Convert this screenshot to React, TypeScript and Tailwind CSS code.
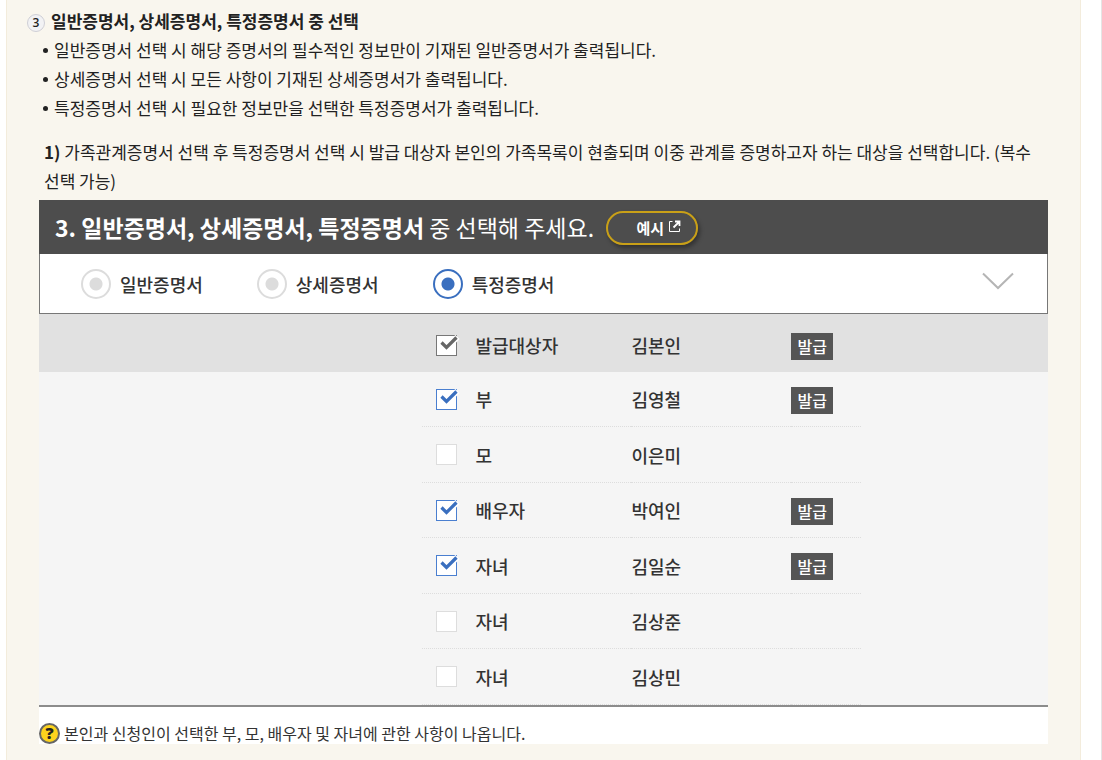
import { useState } from "react";

const CERT_TYPES = ["일반증명서", "상세증명서", "특정증명서"];

const NOTES = [
  "일반증명서 선택 시 해당 증명서의 필수적인 정보만이 기재된 일반증명서가 출력됩니다.",
  "상세증명서 선택 시 모든 사항이 기재된 상세증명서가 출력됩니다.",
  "특정증명서 선택 시 필요한 정보만을 선택한 특정증명서가 출력됩니다.",
];

const FAMILY = [
  { id: "father", relation: "부", name: "김영철", issued: true },
  { id: "mother", relation: "모", name: "이은미", issued: false },
  { id: "spouse", relation: "배우자", name: "박여인", issued: true },
  { id: "child1", relation: "자녀", name: "김일순", issued: true },
  { id: "child2", relation: "자녀", name: "김상준", issued: false },
  { id: "child3", relation: "자녀", name: "김상민", issued: false },
];

type CheckProps = {
  id: string;
  checked: boolean;
  locked?: boolean;
  onChange?: () => void;
};

function CheckBox({ id, checked, locked, onChange }: CheckProps) {
  return (
    <span className="relative block size-[21px] shrink-0">
      <input
        id={id}
        type="checkbox"
        checked={checked}
        readOnly={locked}
        onChange={onChange}
        className={`peer block size-[21px] appearance-none border border-[#dddddd] bg-white ${
          locked ? "checked:border-[#777777]" : "checked:border-[#4a7fd0]"
        }`}
      />
      <svg
        viewBox="0 0 24 24"
        className={`pointer-events-none absolute top-0 left-0 hidden size-6 peer-checked:block ${
          locked ? "text-[#666666]" : "text-[#3a6fbf]"
        }`}
        fill="none"
      >
        {/* white halo opens the corner of the box */}
        <path d="M17.500 6L21.500 2" stroke="white" strokeWidth="6" />
        <path d="M5.500 7.500L10.500 12.500L20.500 2.500" stroke="currentColor" strokeWidth="3.200" />
      </svg>
    </span>
  );
}

function Badge() {
  return (
    <span className="inline-block bg-[#555555] px-[6px] text-[16px] leading-[27px] font-medium text-white">
      발급
    </span>
  );
}

type RowProps = CheckProps & { relation: string; name: string; issued: boolean };

function FamilyRow({ relation, name, issued, ...check }: RowProps) {
  const cell = check.locked ? "pt-1" : "border-b border-dotted border-[#dddddd]";
  return (
    <tr className={check.locked ? "h-[58px] bg-[#e1e1e1]" : "h-[55px] odd:h-14"}>
      <td />
      <td className={`pl-3.5 ${cell}`}>
        <div className="flex items-center gap-[18px]">
          <CheckBox {...check} />
          <label htmlFor={check.id}>{relation}</label>
        </div>
      </td>
      <td className={cell}>{name}</td>
      <td className={cell}>{issued && <Badge />}</td>
      <td />
    </tr>
  );
}

export default function App() {
  const [type, setType] = useState("특정증명서");
  const [picked, setPicked] = useState(FAMILY.filter((f) => f.issued).map((f) => f.id));

  const toggle = (id: string) =>
    setPicked((p) => (p.includes(id) ? p.filter((x) => x !== id) : [...p, id]));

  return (
    <div className="min-h-screen border-r border-[#e5e5e5] bg-white pr-5 pl-1.5 font-['Noto_Sans_CJK_KR',sans-serif] text-[#222222]">
      <main className="min-h-screen border-x border-[#f3ecdc] bg-[#f9f6ee] px-8 pt-1.5 pb-4 text-[17px] leading-[29px]">
        <h2 className="-ml-3 flex items-center gap-1.5 font-bold">
          <span className="mt-1 flex size-[18px] items-center justify-center rounded-full border border-[#cfcfd6] bg-[#f2f2f4] font-['Open_Sans',sans-serif] text-xs font-semibold">
            3
          </span>
          일반증명서, 상세증명서, 특정증명서 중 선택
        </h2>
        <ul className="pl-1">
          {NOTES.map((note) => (
            <li key={note} className="flex items-center gap-1.5">
              <span className="mt-0.5 size-[5px] rounded-full bg-[#222222]" />
              {note}
            </li>
          ))}
        </ul>
        <p className="mt-[15px] pl-[5px]">
          <b>1)</b> 가족관계증명서 선택 후 특정증명서 선택 시 발급 대상자 본인의 가족목록이 현출되며 이중 관계를
          증명하고자 하는 대상을 선택합니다. (복수 선택 가능)
        </p>

        <section className="mt-[5px] bg-white">
          <header className="flex h-[54px] items-center gap-3 bg-[#4d4d4d] px-4 text-white">
            <h3 className="text-[23px]">
              <b>3. 일반증명서, 상세증명서, 특정증명서</b> 중 선택해 주세요.
            </h3>
            <button
              type="button"
              className="mt-px flex h-[34px] w-[92px] items-center justify-end gap-1 rounded-full border-2 border-[#c9a017] pr-[15px] text-[15px] font-bold shadow-[2px_3px_4px_rgba(0,0,0,0.35)]"
            >
              예시
              <svg viewBox="0 0 13 13" className="mb-0.5 size-[13px]" fill="none" stroke="currentColor">
                <path d="M4.500 1.500H1.500V11.500H11.500V8.500" />
                <path d="M7 1.500H11.500V6M11.500 1.500L5.500 7.500" strokeWidth="1.800" />
              </svg>
            </button>
          </header>

          <div className="flex h-[60px] items-center justify-between border border-t-0 border-[#777777] pr-[33px] pl-[41px]">
            <div className="flex gap-[54px] text-lg font-medium text-[#333333]">
              {CERT_TYPES.map((t) => (
                <label key={t} className="flex items-center gap-[9px]">
                  <input
                    type="radio"
                    name="cert"
                    checked={type === t}
                    onChange={() => setType(t)}
                    className="size-[30px] appearance-none rounded-full border-2 border-[#dcdcdc] bg-[radial-gradient(circle,#dcdcdc_6px,white_7px)] checked:border-[#3a6fbf] checked:bg-[radial-gradient(circle,#3a6fbf_6px,white_7px)]"
                  />
                  {t}
                </label>
              ))}
            </div>
            <button type="button" aria-label="접기" className="-mt-1.5">
              <svg viewBox="0 0 32 18" className="h-[18px] w-8" fill="none" stroke="#b5b5b5" strokeWidth="2">
                <path d="M1 1.500L16 16L31 1.500" />
              </svg>
            </button>
          </div>

          <table className="w-full table-fixed border-separate border-spacing-0 border-b-2 border-[#8c8c8c] bg-[#f5f5f5] text-lg font-medium text-[#333333]">
            <colgroup>
              <col className="w-[38%]" />
              <col className="w-[209px]" />
              <col className="w-40" />
              <col className="w-[70px]" />
              <col />
            </colgroup>
            <tbody>
              <FamilyRow id="self" relation="발급대상자" name="김본인" issued checked locked />
              {FAMILY.map((f) => (
                <FamilyRow
                  key={f.id}
                  id={f.id}
                  relation={f.relation}
                  name={f.name}
                  issued={picked.includes(f.id)}
                  checked={picked.includes(f.id)}
                  onChange={() => toggle(f.id)}
                />
              ))}
            </tbody>
          </table>

          <p className="flex items-center gap-1 pt-[15px] text-base leading-[22px] text-[#333333]">
            <span className="flex size-[21px] items-center justify-center rounded-full border-2 border-[#666666] bg-[#fdd31d] font-['Open_Sans',sans-serif] text-base leading-none font-extrabold text-[#222222]">
              ?
            </span>
            본인과 신청인이 선택한 부, 모, 배우자 및 자녀에 관한 사항이 나옵니다.
          </p>
        </section>
      </main>
    </div>
  );
}
